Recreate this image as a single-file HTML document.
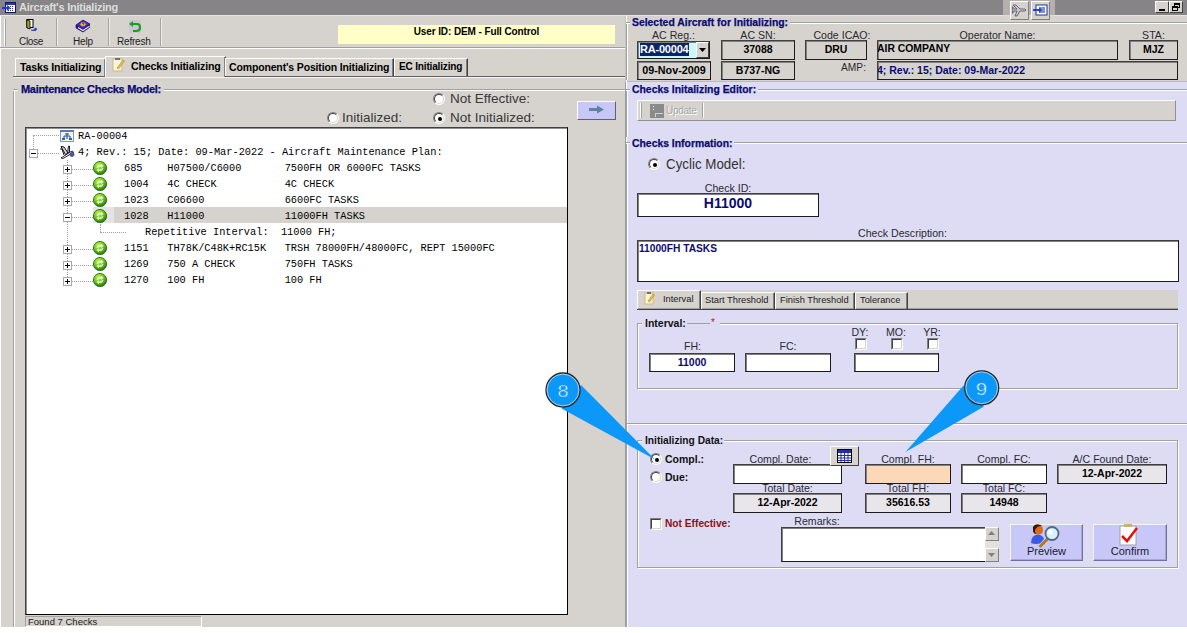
<!DOCTYPE html>
<html><head><meta charset="utf-8">
<style>
*{box-sizing:border-box;margin:0;padding:0}
html,body{width:1187px;height:633px;overflow:hidden;background:#fff;font-family:"Liberation Sans",sans-serif;font-size:11px;color:#000}
.a{position:absolute}
.t{position:absolute;white-space:nowrap;line-height:1}
.b{font-weight:bold}
.navy{color:#0a0a72}
.t.b.navy{-webkit-text-stroke:0.25px #0a0a72}
.radio{position:absolute;width:12px;height:12px;border-radius:50%;background:#fff;border:1px solid;border-color:#808080 #fff #fff #808080}
.radio::before{content:"";position:absolute;left:0;top:0;right:0;bottom:0;border-radius:50%;border:1px solid;border-color:#404040 #d6d3ce #d6d3ce #404040}
.radio.on::after{content:"";position:absolute;left:4px;top:4px;width:4px;height:4px;border-radius:50%;background:#000}
.chk{position:absolute;width:12px;height:12px;background:#fff;border:1px solid;border-color:#808080 #fff #fff #808080}
.chk::before{content:"";position:absolute;left:0;top:0;right:0;bottom:0;border:1px solid;border-color:#404040 #d6d3ce #d6d3ce #404040}
.tab{position:absolute;border-top:1px solid #fff;border-left:1px solid #fff;border-right:1px solid #404040;box-shadow:inset -1px 0 0 #808080}
.fld{position:absolute;border:1px solid #1a1a1a;border-top-color:#404040;border-left-color:#404040;box-shadow:inset 1px 1px 0 #808080;font-weight:bold;text-align:center;white-space:nowrap;line-height:16px;font-size:10.5px}
.grp{position:absolute;border:1px solid #a0a0a0;box-shadow:1px 1px 0 #fff, inset 1px 1px 0 #fff}
.tree{position:absolute;font-family:"Liberation Mono",monospace;font-size:10.3px;white-space:pre;line-height:16px;color:#000}
.dot{position:absolute;border-color:#a0a0a0}
.pm{position:absolute;width:9px;height:9px;border:1px solid #a8a8a8;background:#fff}
.pm::before{content:"";position:absolute;left:1px;top:3px;width:5px;height:1px;background:#000}
.pm.p::after{content:"";position:absolute;left:3px;top:1px;width:1px;height:5px;background:#000}
.gi{position:absolute;width:16px;height:16px;border-radius:50%;background:radial-gradient(circle at 40% 35%,#b8f070 0,#58c020 45%,#2a8010 100%)}
.lbl{position:absolute;white-space:nowrap;line-height:1;color:#2a2a30;font-size:10.6px}
</style></head><body>

<svg width="0" height="0" style="position:absolute"><defs>
<radialGradient id="gg" cx="40%" cy="30%" r="70%"><stop offset="0" stop-color="#c8f850"/><stop offset=".55" stop-color="#6cc818"/><stop offset="1" stop-color="#2a7a10"/></radialGradient>
</defs></svg>
<!-- ================= title bar ================= -->
<div class="a" style="left:0;top:0;width:1187px;height:15px;background:#868486"></div>
<div class="a" style="left:0;top:15px;width:1187px;height:1px;background:#e8e6e0"></div>
<svg class="a" style="left:2px;top:1px" width="14" height="13" viewBox="0 0 14 13">
<rect x="3.5" y="1.5" width="10" height="10" fill="#fff" stroke="#101860"/>
<rect x="4" y="2" width="9" height="2" fill="#2838a8"/>
<path d="M6 5.5 H12 M6 7.5 H12 M6 9.5 H12" stroke="#303060" stroke-width="1" stroke-dasharray="1 1"/>
<path d="M0 6 H5 V4 L8.5 7 L5 10 V8 H0 Z" fill="#1838f0"/>
</svg>
<div class="t b" style="left:19px;top:2px;color:#dedede;font-size:11px;letter-spacing:-0.25px">Aircraft's Initializing</div>

<!-- ================= left panel ================= -->
<div class="a" style="left:0;top:16px;width:625px;height:611px;background:#d6d3ce"></div>
<div class="a" style="left:0;top:16px;width:1px;height:611px;background:#fff"></div>
<div class="a" style="left:625px;top:16px;width:1px;height:66px;background:#c4c2be"></div>
<div class="a" style="left:625px;top:82px;width:1px;height:545px;background:#9c9ca4"></div>
<div class="a" style="left:626px;top:16px;width:1px;height:611px;background:#fff"></div>

<!-- toolbar -->
<div class="a" style="left:4px;top:19px;width:1px;height:27px;background:#fff;box-shadow:1px 0 0 #a0a0a0"></div>
<div class="a" style="left:56px;top:18px;width:1px;height:28px;background:#a4a4a4;box-shadow:1px 0 0 #ecebe8"></div>
<div class="a" style="left:108px;top:18px;width:1px;height:28px;background:#a4a4a4;box-shadow:1px 0 0 #ecebe8"></div>
<div class="a" style="left:160px;top:18px;width:1px;height:28px;background:#a4a4a4;box-shadow:1px 0 0 #ecebe8"></div>
<div class="a" style="left:0;top:47px;width:625px;height:1px;background:#a0a0a0"></div>
<div class="a" style="left:0;top:48px;width:625px;height:1px;background:#fff"></div>
<div class="t" style="left:19px;top:36.5px;font-size:10px;color:#202020;letter-spacing:-0.3px">Close</div>
<div class="t" style="left:73px;top:36.5px;font-size:10px;color:#202020;letter-spacing:-0.2px">Help</div>
<div class="t" style="left:117px;top:36.5px;font-size:10px;color:#202020;letter-spacing:-0.2px">Refresh</div>
<!-- close icon -->
<svg class="a" style="left:24px;top:19px" width="15" height="15" viewBox="0 0 15 15">
<rect x="3" y="0.5" width="6" height="8" fill="#fff" stroke="#000"/>
<path d="M2.5 1 L6 2 L6 10 L3 9 Z" fill="#a8a020" stroke="#000" stroke-width="0.8"/>
<path d="M7 11 Q10 12 12 10 M10.5 9 L12.5 10 L11 12" fill="none" stroke="#3040b0" stroke-width="1.2"/>
</svg>
<!-- help icon -->
<svg class="a" style="left:75px;top:19px" width="16" height="15" viewBox="0 0 16 15">
<path d="M1 6 L8 1 L15 5 L15 8 L8 13 L1 9 Z" fill="#2a1890"/>
<path d="M1 6 L8 1 L15 5 L8 10 Z" fill="#4a30c0" stroke="#180c60" stroke-width=".6"/>
<path d="M3 8.5 L8 11.5 L14.5 7.2" fill="none" stroke="#f0f0f0" stroke-width="1.2"/>
<path d="M1 6 L1 9 L8 13 L15 8" fill="none" stroke="#180c60" stroke-width=".7"/>
<ellipse cx="8" cy="5.3" rx="2.6" ry="2" fill="#f0b020"/>
<path d="M7 4.5 Q8 3.3 9 4.5 Q9 5.2 8 5.7" fill="none" stroke="#7a0a60" stroke-width=".8"/>
</svg>
<!-- refresh icon -->
<svg class="a" style="left:128px;top:20px" width="14" height="14" viewBox="0 0 14 14">
<rect x="1" y="0" width="12" height="13" fill="#c8c6d4"/>
<path d="M4 4 L9 4 Q12 4 12 7.5 Q12 11 8 11 L5 11" fill="none" stroke="#18a018" stroke-width="2.2"/>
<path d="M1 4 L5 1 L5 7 Z" fill="#18a018"/>
</svg>

<!-- user id box -->
<div class="a" style="left:338px;top:25px;width:277px;height:19px;background:#ffffc8"></div>
<div class="t b" style="left:338px;top:27px;width:277px;text-align:center;font-size:10px;letter-spacing:-0.1px">User ID: DEM - Full Control</div>

<!-- tabs -->
<div class="a" style="left:13px;top:76px;width:612px;height:1px;background:#606060"></div>
<div class="a" style="left:13px;top:77px;width:612px;height:1px;background:#f4f4f4"></div>
<div class="tab" style="left:15px;top:58px;width:91px;height:18px;"></div>
<div class="t b" style="left:20px;top:62px;font-size:10.6px;letter-spacing:-0.15px">Tasks Initializing</div>
<div class="tab" style="left:105px;top:56px;width:121px;height:21px;background:#d6d3ce;border-right:1px solid #404040"></div>
<svg class="a" style="left:112px;top:57px" width="13" height="16" viewBox="0 0 13 16">
<rect x="1" y="2" width="9" height="12" fill="#f8f4e0" stroke="#d8b870"/>
<rect x="3" y="1" width="5" height="2" fill="#707070"/>
<path d="M5 11 L11 3 L12.5 4 L6.5 12 Z" fill="#e8c040" stroke="#b08010" stroke-width="0.5"/>
</svg>
<div class="t b" style="left:131px;top:61px;font-size:10.6px;letter-spacing:-0.15px">Checks Initializing</div>
<div class="tab" style="left:225px;top:58px;width:169px;height:18px;"></div>
<div class="t b" style="left:229px;top:62px;font-size:10.5px;letter-spacing:-0.15px">Component's Position Initializing</div>
<div class="tab" style="left:394px;top:58px;width:74px;height:18px;"></div>
<div class="t b" style="left:399px;top:62px;font-size:10.1px;letter-spacing:-0.2px">EC Initializing</div>

<!-- groupbox Maintenance Checks Model -->
<div class="a" style="left:13px;top:89px;width:1px;height:538px;background:#a0a0a0;box-shadow:1px 0 0 #fff"></div>
<div class="a" style="left:13px;top:89px;width:612px;height:1px;background:#a0a0a0;box-shadow:0 1px 0 #fff"></div>
<div class="t b navy" style="left:18px;top:84px;padding:0 3px;background:#d6d3ce;font-size:11px;letter-spacing:-0.3px">Maintenance Checks Model:</div>

<!-- radios -->
<div class="radio" style="left:433px;top:93px"></div>
<div class="t" style="left:450px;top:92px;font-size:13.5px;color:#383838">Not Effective:</div>
<div class="radio" style="left:327px;top:112px"></div>
<div class="t" style="left:342px;top:111px;font-size:13.5px;color:#383838">Initialized:</div>
<div class="radio on" style="left:433px;top:112px"></div>
<div class="t" style="left:450px;top:111px;font-size:13.5px;color:#383838">Not Initialized:</div>

<!-- arrow button -->
<div class="a" style="left:577px;top:101px;width:39px;height:19px;background:#c8c8f8;border:1px solid;border-color:#fff #606070 #606070 #fff"></div>
<svg class="a" style="left:588px;top:105px" width="17" height="9" viewBox="0 0 17 9">
<path d="M1 3 L9 3 L9 0.5 L16 4.5 L9 8.5 L9 6 L1 6 Z" fill="#6080a8"/>
</svg>

<!-- tree -->
<div class="a" style="left:25px;top:127px;width:543px;height:488px;background:#fff;border:1px solid;border-color:#404040 #000 #000 #404040;box-shadow:inset 1px 1px 0 #909090"></div>
<div class="a" style="left:93px;top:207px;width:21px;height:16px;background:#e6e4e0"></div>
<div class="a" style="left:114px;top:207px;width:453px;height:16px;background:#d6d3ce"></div>

<!-- tree lines -->
<div class="a" style="left:33px;top:135px;width:1px;height:14px;border-left:1px dotted #a0a0a0"></div>
<div class="a" style="left:33px;top:135px;width:26px;height:1px;border-top:1px dotted #a0a0a0"></div>
<div class="a" style="left:38px;top:153px;width:21px;height:1px;border-top:1px dotted #a0a0a0"></div>
<div class="a" style="left:67px;top:160px;width:1px;height:121px;border-left:1px dotted #a0a0a0"></div>
<div class="a" style="left:67px;top:169px;width:26px;height:1px;border-top:1px dotted #a0a0a0"></div>
<div class="a" style="left:67px;top:185px;width:26px;height:1px;border-top:1px dotted #a0a0a0"></div>
<div class="a" style="left:67px;top:201px;width:26px;height:1px;border-top:1px dotted #a0a0a0"></div>
<div class="a" style="left:67px;top:217px;width:26px;height:1px;border-top:1px dotted #a0a0a0"></div>
<div class="a" style="left:67px;top:249px;width:26px;height:1px;border-top:1px dotted #a0a0a0"></div>
<div class="a" style="left:67px;top:265px;width:26px;height:1px;border-top:1px dotted #a0a0a0"></div>
<div class="a" style="left:67px;top:281px;width:26px;height:1px;border-top:1px dotted #a0a0a0"></div>
<div class="a" style="left:100px;top:224px;width:1px;height:8px;border-left:1px dotted #a0a0a0"></div>
<div class="a" style="left:100px;top:232px;width:26px;height:1px;border-top:1px dotted #a0a0a0"></div>

<div class="pm" style="left:29px;top:149px"></div>
<div class="pm p" style="left:63px;top:165px"></div>
<div class="pm p" style="left:63px;top:181px"></div>
<div class="pm p" style="left:63px;top:197px"></div>
<div class="pm" style="left:63px;top:213px"></div>
<div class="pm p" style="left:63px;top:245px"></div>
<div class="pm p" style="left:63px;top:261px"></div>
<div class="pm p" style="left:63px;top:277px"></div>

<!-- RA icon -->
<svg class="a" style="left:60px;top:130px" width="14" height="12" viewBox="0 0 14 12">
<rect x="0" y="0" width="14" height="12" fill="#8098c8"/>
<rect x="1" y="2" width="12" height="9" fill="#f4f4e0"/>
<rect x="0" y="0" width="14" height="2" fill="#5878c0"/>
<path d="M7 3 V6 M4 6 H10 M4 6 V9 M10 6 V9 M7 6 V9 M5 4 L9 4" stroke="#3050a0" stroke-width="1.1" fill="none"/>
<rect x="2" y="8" width="3" height="2" fill="#3060b0"/><rect x="9" y="8" width="3" height="2" fill="#3060b0"/>
</svg>
<!-- plane icon -->
<svg class="a" style="left:59px;top:145px" width="16" height="14" viewBox="0 0 16 14">
<path d="M2 13 L12 6.5 Q14.5 5.5 14.5 7.5 L4 13.5 Z" fill="#e8e8ec" stroke="#202028" stroke-width="0.9"/>
<path d="M2 1.5 L5 2 L9 8 L6.5 9.5 Z" fill="#d8d8e0" stroke="#101018" stroke-width="1"/>
<path d="M9.5 1 L10.5 1 L10.5 7 L8.5 8 Z" fill="#d0d0d8" stroke="#101018" stroke-width="0.9"/>
<path d="M1 4 L3 4 L5 10" fill="none" stroke="#101018" stroke-width="1"/>
<circle cx="13" cy="9.5" r="2" fill="#5060b0" stroke="#202060" stroke-width=".7"/>
</svg>
<div class="tree" style="left:78px;top:128px">RA-00004</div>
<div class="tree" style="left:78px;top:144px">4; Rev.: 15; Date: 09-Mar-2022 - Aircraft Maintenance Plan:</div>

<svg class="a" style="left:93px;top:161px" width="14" height="14" viewBox="0 0 14 14"><circle cx="7" cy="7" r="6.6" fill="url(#gg)" stroke="#205a10" stroke-width=".8"/><path d="M3.5 6.5 Q4.5 3.5 8 4 L8 2.8 L10.5 5 L8 6.8 L8 5.6 Q5.5 5.2 4.8 7 Z" fill="#fff" opacity=".9"/><path d="M10.5 7.5 Q9.5 10.5 6 10 L6 11.2 L3.5 9 L6 7.2 L6 8.4 Q8.5 8.8 9.2 7 Z" fill="#e8fff0" opacity=".85"/></svg>
<svg class="a" style="left:93px;top:177px" width="14" height="14" viewBox="0 0 14 14"><circle cx="7" cy="7" r="6.6" fill="url(#gg)" stroke="#205a10" stroke-width=".8"/><path d="M3.5 6.5 Q4.5 3.5 8 4 L8 2.8 L10.5 5 L8 6.8 L8 5.6 Q5.5 5.2 4.8 7 Z" fill="#fff" opacity=".9"/><path d="M10.5 7.5 Q9.5 10.5 6 10 L6 11.2 L3.5 9 L6 7.2 L6 8.4 Q8.5 8.8 9.2 7 Z" fill="#e8fff0" opacity=".85"/></svg>
<svg class="a" style="left:93px;top:193px" width="14" height="14" viewBox="0 0 14 14"><circle cx="7" cy="7" r="6.6" fill="url(#gg)" stroke="#205a10" stroke-width=".8"/><path d="M3.5 6.5 Q4.5 3.5 8 4 L8 2.8 L10.5 5 L8 6.8 L8 5.6 Q5.5 5.2 4.8 7 Z" fill="#fff" opacity=".9"/><path d="M10.5 7.5 Q9.5 10.5 6 10 L6 11.2 L3.5 9 L6 7.2 L6 8.4 Q8.5 8.8 9.2 7 Z" fill="#e8fff0" opacity=".85"/></svg>
<svg class="a" style="left:93px;top:209px" width="14" height="14" viewBox="0 0 14 14"><circle cx="7" cy="7" r="6.6" fill="url(#gg)" stroke="#205a10" stroke-width=".8"/><path d="M3.5 6.5 Q4.5 3.5 8 4 L8 2.8 L10.5 5 L8 6.8 L8 5.6 Q5.5 5.2 4.8 7 Z" fill="#fff" opacity=".9"/><path d="M10.5 7.5 Q9.5 10.5 6 10 L6 11.2 L3.5 9 L6 7.2 L6 8.4 Q8.5 8.8 9.2 7 Z" fill="#e8fff0" opacity=".85"/></svg>
<svg class="a" style="left:93px;top:241px" width="14" height="14" viewBox="0 0 14 14"><circle cx="7" cy="7" r="6.6" fill="url(#gg)" stroke="#205a10" stroke-width=".8"/><path d="M3.5 6.5 Q4.5 3.5 8 4 L8 2.8 L10.5 5 L8 6.8 L8 5.6 Q5.5 5.2 4.8 7 Z" fill="#fff" opacity=".9"/><path d="M10.5 7.5 Q9.5 10.5 6 10 L6 11.2 L3.5 9 L6 7.2 L6 8.4 Q8.5 8.8 9.2 7 Z" fill="#e8fff0" opacity=".85"/></svg>
<svg class="a" style="left:93px;top:257px" width="14" height="14" viewBox="0 0 14 14"><circle cx="7" cy="7" r="6.6" fill="url(#gg)" stroke="#205a10" stroke-width=".8"/><path d="M3.5 6.5 Q4.5 3.5 8 4 L8 2.8 L10.5 5 L8 6.8 L8 5.6 Q5.5 5.2 4.8 7 Z" fill="#fff" opacity=".9"/><path d="M10.5 7.5 Q9.5 10.5 6 10 L6 11.2 L3.5 9 L6 7.2 L6 8.4 Q8.5 8.8 9.2 7 Z" fill="#e8fff0" opacity=".85"/></svg>
<svg class="a" style="left:93px;top:273px" width="14" height="14" viewBox="0 0 14 14"><circle cx="7" cy="7" r="6.6" fill="url(#gg)" stroke="#205a10" stroke-width=".8"/><path d="M3.5 6.5 Q4.5 3.5 8 4 L8 2.8 L10.5 5 L8 6.8 L8 5.6 Q5.5 5.2 4.8 7 Z" fill="#fff" opacity=".9"/><path d="M10.5 7.5 Q9.5 10.5 6 10 L6 11.2 L3.5 9 L6 7.2 L6 8.4 Q8.5 8.8 9.2 7 Z" fill="#e8fff0" opacity=".85"/></svg>

<div class="tree" style="left:124px;top:160px">685    H07500/C6000       7500FH OR 6000FC TASKS
1004   4C CHECK           4C CHECK
1023   C06600             6600FC TASKS
1028   H11000             11000FH TASKS</div>
<div class="tree" style="left:145px;top:224px">Repetitive Interval:  11000 FH;</div>
<div class="tree" style="left:124px;top:240px">1151   TH78K/C48K+RC15K   TRSH 78000FH/48000FC, REPT 15000FC
1269   750 A CHECK        750FH TASKS
1270   100 FH             100 FH</div>

<!-- status -->
<div class="a" style="left:25px;top:616px;width:177px;height:11px;background:#d6d3ce;border:1px solid;border-color:#a0a0a0 #fff #fff #a0a0a0"></div>
<div class="t" style="left:28px;top:617px;font-size:9.5px;color:#202020">Found 7 Checks</div>


<!-- ================= right panel ================= -->
<div class="a" style="left:627px;top:16px;width:560px;height:65px;background:#d6d3ce"></div>
<div class="a" style="left:627px;top:81px;width:560px;height:1px;background:#b8b8c8"></div>
<div class="a" style="left:627px;top:82px;width:560px;height:545px;background:#dddcf4"></div>

<!-- title-bar extra buttons -->
<div class="a" style="left:1003px;top:0;width:52px;height:22px;background:#d8d6d0;opacity:.55"></div>
<div class="a" style="left:1010px;top:1px;width:19px;height:19px;background:#d6d3ce;border:1px solid;border-color:#fff #808080 #808080 #fff"></div>
<svg class="a" style="left:1012px;top:4px" width="15" height="13" viewBox="0 0 15 13"><path d="M1 1 L4 1 L8 5 L13 5 Q15 6 13 7 L8 7 L5 12 L3 12 L5 7 L2 7 L1 9 L0 9 L1 6 L0 3 L1 3 L2 5 L5 5 Z" fill="#c8c8d0" stroke="#505060" stroke-width="0.8"/></svg>
<div class="a" style="left:1031px;top:1px;width:19px;height:19px;background:#d6d3ce;border:1px solid;border-color:#fff #808080 #808080 #fff"></div>
<svg class="a" style="left:1033px;top:4px" width="15" height="13" viewBox="0 0 15 13"><rect x="3" y="1" width="11" height="10" fill="#fff" stroke="#2030a0"/><rect x="6" y="3" width="6" height="6" fill="#8090d0"/><path d="M0 5 L6 5 L6 3 L9 6 L6 9 L6 7 L0 7Z" fill="#2040e0"/></svg>
<div class="a" style="left:1155px;top:1px;width:14px;height:12px;background:#d6d3ce;border:1px solid;border-color:#fff #404040 #404040 #fff"></div>
<div class="a" style="left:1159px;top:9px;width:6px;height:2px;background:#000"></div>
<div class="a" style="left:1169px;top:1px;width:14px;height:12px;background:#d6d3ce;border:1px solid;border-color:#fff #404040 #404040 #fff"></div>
<div class="a" style="left:1174px;top:3px;width:6px;height:5px;border:1px solid #000;border-top-width:2px"></div>
<div class="a" style="left:1172px;top:6px;width:6px;height:5px;border:1px solid #000;border-top-width:2px;background:#d6d3ce"></div>

<!-- selected aircraft group -->
<div class="a" style="left:626px;top:22px;width:1px;height:58px;background:#a0a0a0;box-shadow:1px 0 0 #fff"></div>
<div class="a" style="left:626px;top:22px;width:561px;height:1px;background:#a0a0a0;box-shadow:0 1px 0 #fff"></div>
<div class="t b navy" style="left:630px;top:18px;padding:0 2px;background:#d6d3ce;font-size:10.4px">Selected Aircraft for Initializing:</div>

<div class="lbl" style="left:637px;top:30px;width:73px;text-align:center">AC Reg.:</div>
<div class="lbl" style="left:721px;top:30px;width:74px;text-align:center">AC SN:</div>
<div class="lbl" style="left:811px;top:30px;width:62px;text-align:center">Code ICAO:</div>
<div class="lbl" style="left:877px;top:30px;width:241px;text-align:center">Operator Name:</div>
<div class="lbl" style="left:1129px;top:30px;width:49px;text-align:center">STA:</div>

<div class="fld" style="left:637px;top:41px;width:73px;height:18px;background:#ccf8ff"></div>
<div class="a" style="left:640px;top:43px;width:49px;height:13px;background:#0a246a"></div>
<div class="t b" style="left:640px;top:44px;font-size:11px;color:#fff;letter-spacing:-0.2px">RA-00004</div>
<div class="a" style="left:696px;top:42px;width:13px;height:16px;background:#d6d3ce;border:1px solid;border-color:#fff #404040 #404040 #fff"></div>
<svg class="a" style="left:699px;top:48px" width="7" height="4" viewBox="0 0 7 4"><path d="M0 0 L7 0 L3.5 4Z" fill="#000"/></svg>

<div class="fld" style="left:721px;top:40px;width:74px;height:20px;background:#d6d3ce;line-height:16px">37088</div>
<div class="fld" style="left:805px;top:40px;width:62px;height:20px;background:#d6d3ce;line-height:16px">DRU</div>
<div class="fld" style="left:877px;top:40px;width:241px;height:20px;background:#d6d3ce;text-align:left;text-indent:-1px;font-size:10.4px;line-height:16px;overflow:hidden">AIR COMPANY</div>
<div class="fld" style="left:1129px;top:40px;width:49px;height:20px;background:#d6d3ce;line-height:16px">MJZ</div>

<div class="fld" style="left:637px;top:61px;width:74px;height:19px;background:#d6d3ce;font-size:10.8px">09-Nov-2009</div>
<div class="fld" style="left:721px;top:61px;width:74px;height:19px;background:#d6d3ce">B737-NG</div>
<div class="lbl" style="left:820px;top:63px;width:46px;text-align:right;font-size:10.2px">AMP:</div>
<div class="fld navy" style="left:877px;top:61px;width:301px;height:19px;background:#d6d3ce;text-align:left;text-indent:-1px;font-size:10.5px;overflow:hidden">4; Rev.: 15; Date: 09-Mar-2022</div>

<!-- editor group -->
<div class="a" style="left:626px;top:89px;width:1px;height:48px;background:#a0a0a0;box-shadow:1px 0 0 #fff"></div>
<div class="a" style="left:626px;top:89px;width:561px;height:1px;background:#a0a0a0;box-shadow:0 1px 0 #fff"></div>
<div class="t b navy" style="left:630px;top:85px;padding:0 2px;background:#dddcf4;font-size:10.4px">Checks Initalizing Editor:</div>
<div class="a" style="left:637px;top:100px;width:539px;height:21px;background:#d6d3ce;border:1px solid;border-color:#fff #909090 #909090 #fff"></div>
<div class="a" style="left:640px;top:103px;width:2px;height:15px;background:#fff;border-right:1px solid #a0a0a0"></div>
<div class="a" style="left:650px;top:104px;width:14px;height:14px;background:#8a8a8a"></div>
<div class="a" style="left:653px;top:106px;width:1px;height:1px;background:#fff;box-shadow:0 3px 0 #fff"></div>
<div class="a" style="left:655px;top:113px;width:8px;height:4px;border-top:1px solid #d0d0d0;border-left:1px solid #d0d0d0"></div>
<div class="t" style="left:666px;top:106px;font-size:10px;color:#a8a8a8;letter-spacing:-0.3px;text-shadow:1px 1px 0 #fff">Update</div>
<div class="a" style="left:702px;top:103px;width:1px;height:15px;background:#a0a0a0;box-shadow:1px 0 0 #fff"></div>

<!-- checks information group -->
<div class="a" style="left:626px;top:142px;width:1px;height:485px;background:#a0a0a0;box-shadow:1px 0 0 #fff"></div>
<div class="a" style="left:626px;top:142px;width:561px;height:1px;background:#a0a0a0;box-shadow:0 1px 0 #fff"></div>
<div class="t b navy" style="left:630px;top:139px;padding:0 2px;background:#dddcf4;font-size:10.4px">Checks Information:</div>

<div class="radio on" style="left:648px;top:158px"></div>
<div class="t" style="left:666px;top:156px;font-size:15px;color:#333;transform:scaleX(.89);transform-origin:0 0">Cyclic Model:</div>

<div class="lbl" style="left:637px;top:183px;width:182px;text-align:center">Check ID:</div>
<div class="fld navy" style="left:637px;top:193px;width:182px;height:24px;background:#fff;font-size:14px;line-height:19px">H11000</div>

<div class="lbl" style="left:627px;top:228px;width:551px;text-align:center">Check Description:</div>
<div class="fld navy" style="left:637px;top:240px;width:542px;height:42px;background:#fff;text-align:left;padding-left:1px;font-size:10.2px;line-height:12px;padding-top:2px">11000FH TASKS</div>

<!-- inner tabs -->
<div class="a" style="left:637px;top:290px;width:541px;height:20px;background:#d6d3ce"></div>
<div class="a" style="left:637px;top:309px;width:541px;height:1px;background:#404040"></div>
<div class="a" style="left:637px;top:308px;width:541px;height:1px;background:#a0a0a0"></div>
<div class="tab" style="left:637px;top:290px;width:64px;height:19px;border-top:1px solid #fff"></div>
<svg class="a" style="left:644px;top:291px" width="11" height="14" viewBox="0 0 11 14">
<rect x="1" y="2" width="8" height="11" fill="#f8f4e0" stroke="#d8b870"/>
<rect x="3" y="1" width="4" height="2" fill="#707070"/>
<path d="M4 10 L9 3 L10.5 4 L5.5 11 Z" fill="#e8c040" stroke="#b08010" stroke-width="0.5"/>
</svg>
<div class="t" style="left:663px;top:295px;font-size:9.3px;color:#202020">Interval</div>
<div class="tab" style="left:701px;top:292px;width:74px;height:17px"></div>
<div class="t" style="left:705px;top:296px;font-size:9.3px;color:#202020">Start Threshold</div>
<div class="tab" style="left:775px;top:292px;width:80px;height:17px"></div>
<div class="t" style="left:780px;top:296px;font-size:9.3px;color:#202020">Finish Threshold</div>
<div class="tab" style="left:855px;top:292px;width:53px;height:17px"></div>
<div class="t" style="left:860px;top:296px;font-size:9.3px;color:#202020">Tolerance</div>

<!-- interval group -->
<div class="grp" style="left:637px;top:323px;width:541px;height:66px"></div>
<div class="a" style="left:642px;top:318px;width:78px;height:10px;background:#dddcf4"></div>
<div class="t b" style="left:645px;top:318px;font-size:10.5px;color:#111">Interval:</div>
<div class="a" style="left:687px;top:323px;width:23px;height:1px;background:#a0a0a0"></div>
<div class="t" style="left:711px;top:318px;font-size:10px;color:#d01010">*</div>

<div class="lbl" style="left:650px;top:341px;width:85px;text-align:center">FH:</div>
<div class="lbl" style="left:745px;top:341px;width:86px;text-align:center">FC:</div>
<div class="lbl" style="left:850px;top:327px;width:20px;text-align:center">DY:</div>
<div class="lbl" style="left:886px;top:327px;width:20px;text-align:center">MO:</div>
<div class="lbl" style="left:922px;top:327px;width:20px;text-align:center">YR:</div>
<div class="chk" style="left:855px;top:338px"></div>
<div class="chk" style="left:891px;top:338px"></div>
<div class="chk" style="left:927px;top:338px"></div>
<div class="fld navy" style="left:649px;top:353px;width:86px;height:19px;background:#fff">11000</div>
<div class="fld" style="left:745px;top:353px;width:86px;height:19px;background:#fff"></div>
<div class="fld" style="left:854px;top:353px;width:85px;height:19px;background:#fff"></div>

<!-- separator -->
<div class="a" style="left:627px;top:423px;width:560px;height:1px;background:#a0a0a0;box-shadow:0 1px 0 #fff"></div>

<!-- initializing data group -->
<div class="grp" style="left:637px;top:440px;width:541px;height:128px"></div>
<div class="a" style="left:642px;top:434px;width:82px;height:12px;background:#dddcf4"></div>
<div class="t b" style="left:645px;top:436px;font-size:10.2px;color:#111">Initializing Data:</div>

<div class="radio on" style="left:650px;top:453px"></div>
<div class="t b" style="left:665px;top:454px;font-size:10.5px;color:#111">Compl.:</div>
<div class="radio" style="left:650px;top:471px"></div>
<div class="t b" style="left:665px;top:472px;font-size:10.5px;color:#111">Due:</div>

<div class="lbl" style="left:733px;top:454px;width:109px;text-align:center;padding-right:14px">Compl. Date:</div>
<div class="fld" style="left:733px;top:464px;width:109px;height:20px;background:#fff"></div>
<div class="a" style="left:830px;top:446px;width:29px;height:20px;background:#d6d3ce;border:1px solid;border-color:#fff #404040 #404040 #fff"></div>
<svg class="a" style="left:837px;top:449px" width="15" height="14" viewBox="0 0 15 14"><rect x="0.5" y="0.5" width="14" height="13" fill="#fff" stroke="#000"/><rect x="1" y="1" width="13" height="3" fill="#2030a0"/><path d="M1 6.5 H14 M1 9 H14 M1 11.5 H14 M4 4 V13 M7.5 4 V13 M11 4 V13" stroke="#2030a0" stroke-width="1"/></svg>

<div class="lbl" style="left:865px;top:454px;width:86px;text-align:center">Compl. FH:</div>
<div class="fld" style="left:865px;top:464px;width:86px;height:20px;background:#fcd8b8"></div>
<div class="lbl" style="left:961px;top:454px;width:86px;text-align:center">Compl. FC:</div>
<div class="fld" style="left:961px;top:464px;width:86px;height:20px;background:#fff"></div>
<div class="lbl" style="left:1057px;top:454px;width:110px;text-align:center">A/C Found Date:</div>
<div class="fld" style="left:1057px;top:464px;width:110px;height:20px;background:#e8e6ea">12-Apr-2022</div>

<div class="lbl" style="left:733px;top:483px;width:109px;text-align:center">Total Date:</div>
<div class="fld" style="left:733px;top:493px;width:109px;height:20px;background:#e8e6ea">12-Apr-2022</div>
<div class="lbl" style="left:865px;top:483px;width:86px;text-align:center">Total FH:</div>
<div class="fld" style="left:865px;top:493px;width:86px;height:20px;background:#e8e6ea">35616.53</div>
<div class="lbl" style="left:961px;top:483px;width:86px;text-align:center">Total FC:</div>
<div class="fld" style="left:961px;top:493px;width:86px;height:20px;background:#e8e6ea">14948</div>

<div class="chk" style="left:650px;top:518px"></div>
<div class="t b" style="left:665px;top:519px;font-size:10.2px;color:#8c1010">Not Effective:</div>
<div class="lbl" style="left:781px;top:516px;width:72px;text-align:center">Remarks:</div>
<div class="fld" style="left:781px;top:527px;width:205px;height:35px;background:#fff"></div>
<div class="a" style="left:985px;top:540px;width:14px;height:8px;background:#e4e2de;z-index:1"></div>
<div class="a" style="left:985px;top:527px;width:14px;height:14px;z-index:2;background:#d6d3ce;border:1px solid;border-color:#fff #808080 #808080 #fff"></div>
<svg class="a" style="left:988px;top:531px;z-index:3" width="7" height="4"><path d="M0 4 L7 4 L3.5 0Z" fill="#808080"/></svg>
<div class="a" style="left:985px;top:548px;width:14px;height:14px;z-index:2;background:#d6d3ce;border:1px solid;border-color:#fff #808080 #808080 #fff"></div>
<svg class="a" style="left:988px;top:553px;z-index:3" width="7" height="4"><path d="M0 0 L7 0 L3.5 4Z" fill="#808080"/></svg>

<!-- preview & confirm -->
<div class="a" style="left:1010px;top:524px;width:73px;height:37px;background:#c8c8f8;border:1px solid;border-color:#f4f4fc #7070a0 #7070a0 #f4f4fc;box-shadow:inset -1px -1px 0 #a8a8d0"></div>
<svg class="a" style="left:1028px;top:524px" width="34" height="24" viewBox="0 0 34 24">
<path d="M5 6 Q5 0 10 0.5 Q15 1 15 6 Q15 10.5 10 10.5 Q5 10.5 5 6Z" fill="#e06818"/>
<path d="M5 6 Q4 0.5 10 0.5 Q13 0.5 14 2 Q9 1.5 7 6 Q6.5 8 8 10 Q5 9 5 6Z" fill="#301810"/>
<path d="M3 19 Q3 11 10 10.5 Q15 11 16 15 L12 19.5 Q7 20.5 3 19Z" fill="#3a5ae8"/>
<path d="M19.5 15 L12.5 22" stroke="#b07818" stroke-width="3" stroke-linecap="round"/>
<circle cx="24" cy="9.5" r="6.5" fill="#d8f0ff" stroke="#506880" stroke-width="1.8"/>
<circle cx="22.5" cy="8" r="2.5" fill="#ffffff" opacity=".8"/>
</svg>
<div class="t" style="left:1010px;top:546px;width:73px;text-align:center;font-size:11px;color:#1a1a30">Preview</div>

<div class="a" style="left:1093px;top:524px;width:74px;height:37px;background:#c8c8f8;border:1px solid;border-color:#f4f4fc #7070a0 #7070a0 #f4f4fc;box-shadow:inset -1px -1px 0 #a8a8d0"></div>
<svg class="a" style="left:1117px;top:524px" width="22" height="22" viewBox="0 0 22 22">
<rect x="3" y="2" width="16" height="19" fill="#fff" stroke="#a0a0b0"/>
<rect x="7" y="0" width="8" height="3" fill="#d0b070"/>
<path d="M5 12 L10 17 L20 4" fill="none" stroke="#e01010" stroke-width="2.5"/>
</svg>
<div class="t" style="left:1093px;top:546px;width:74px;text-align:center;font-size:11px;color:#1a1a30">Confirm</div>

<!-- callouts -->
<svg class="a" style="left:0;top:0" width="1187" height="633" viewBox="0 0 1187 633">
<path d="M581 385 L655 459.5 L561.5 408.5 Z" fill="#0c98f8"/>
<circle cx="563" cy="390" r="17" fill="#0c98f8" stroke="#262626" stroke-width="1.3"/>
<circle cx="563" cy="390" r="15.9" fill="none" stroke="#c8d0d8" stroke-width="0.9"/>
<text transform="translate(563 396.8) scale(1.2 1)" text-anchor="middle" font-family="Liberation Sans" font-size="16.5" fill="#fff" stroke="#0c98f8" stroke-width=".5">8</text>
<path d="M963.5 385.5 L905.5 452 L984 406.5 Z" fill="#0c98f8"/>
<circle cx="981.7" cy="387.8" r="17" fill="#0c98f8" stroke="#262626" stroke-width="1.3"/>
<circle cx="981.7" cy="387.8" r="15.9" fill="none" stroke="#c8d0d8" stroke-width="0.9"/>
<text transform="translate(981.5 395) scale(1.2 1)" text-anchor="middle" font-family="Liberation Sans" font-size="17" fill="#fff" stroke="#0c98f8" stroke-width=".5">9</text>
</svg>
</body></html>
